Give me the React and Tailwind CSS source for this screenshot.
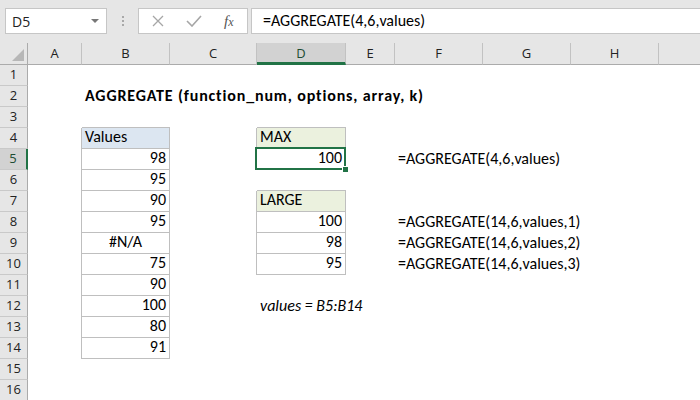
import React from 'react';

const COLS = ['A', 'B', 'C', 'D', 'E', 'F', 'G', 'H', 'I'];

// cells that carry a thin border box
const boxed = new Set([
    'B4', 'B5', 'B6', 'B7', 'B8', 'B9', 'B10', 'B11', 'B12', 'B13', 'B14',
    'D4', 'D5', 'D7', 'D8', 'D9', 'D10',
]);

const cells = {
    B2: { text: 'AGGREGATE (function_num, options, array, k)', cls: 'font-bold tracking-[0.85px] text-[16.5px]' },
    B4: { text: 'Values', bg: 'bg-[#dce6f1]' },
    B5: { text: '98', right: true },
    B6: { text: '95', right: true },
    B7: { text: '90', right: true },
    B8: { text: '95', right: true },
    B9: { text: '#N/A', center: true },
    B10: { text: '75', right: true },
    B11: { text: '90', right: true },
    B12: { text: '100', right: true },
    B13: { text: '80', right: true },
    B14: { text: '91', right: true },
    D4: { text: 'MAX', bg: 'bg-[#ebf1de]' },
    D5: { text: '100', right: true, selected: true },
    D7: { text: 'LARGE', bg: 'bg-[#ebf1de]' },
    D8: { text: '100', right: true },
    D9: { text: '98', right: true },
    D10: { text: '95', right: true },
    D12: { text: 'values = B5:B14', cls: 'italic' },
    F5: { text: '=AGGREGATE(4,6,values)' },
    F8: { text: '=AGGREGATE(14,6,values,1)' },
    F9: { text: '=AGGREGATE(14,6,values,2)' },
    F10: { text: '=AGGREGATE(14,6,values,3)' },
};

const cellFont = { fontFamily: 'Carlito, Calibri, Lato, sans-serif' };
const uiFont = { fontFamily: '"Segoe UI", "Open Sans", "Noto Sans", sans-serif' };

function Cell({ row, colIdx }) {
    const col = COLS[colIdx];
    const id = col + row;
    const c = cells[id] || {};
    // excel draws a border on the right / bottom pixel of the cell or its neighbour
    const right = boxed.has(id) || (colIdx + 1 < COLS.length && boxed.has(COLS[colIdx + 1] + row));
    const bottom = boxed.has(id) || boxed.has(col + (row + 1));

    return (
        <div
            className={
                'relative h-[21px] flex items-end pb-[3px] whitespace-nowrap text-[16px] text-black ' +
                (c.bg || '') + ' ' +
                (right ? 'border-r border-r-[#bfbfbf] ' : '') +
                (bottom ? 'border-b border-b-[#bfbfbf] ' : '') +
                (c.right ? 'justify-end pr-[3px] ' : c.center ? 'justify-center ' : 'pl-[3px] ') +
                (c.cls || '')
            }
            style={cellFont}
        >
            {c.text && <span className="leading-none">{c.text}</span>}
            {c.selected && (
                <>
                    <div className="absolute -left-[2px] -top-[2px] -right-[1px] -bottom-[1px] border-2 border-[#217346]" />
                    <div className="absolute -right-[4px] -bottom-[4px] w-[7px] h-[7px] bg-[#217346] border border-white" />
                </>
            )}
        </div>
    );
}

export default function App() {
    const rows = Array.from({ length: 16 }, (_, i) => i + 1);

    return (
        <div className="w-[700px] h-[400px] overflow-hidden bg-white select-none">
            {/* Formula bar */}
            <div className="h-[43px] bg-[#e6e6e6] flex items-start pt-[8px] pl-[5px]">
                <div className="w-[102px] h-[26px] bg-white border border-[#c6c6c6] flex items-center justify-between pl-[6px] pr-[7px]">
                    <span className="text-[14px] text-[#222]" style={uiFont}>D5</span>
                    <svg width="8" height="5" viewBox="0 0 8 5"><path d="M0 0 L8 0 L4 4 Z" fill="#777" /></svg>
                </div>
                <div className="w-[31px] h-[26px] flex flex-col items-center justify-center gap-[2px]">
                    <div className="w-[2px] h-[2px] bg-[#a8a8a8]" />
                    <div className="w-[2px] h-[2px] bg-[#a8a8a8]" />
                    <div className="w-[2px] h-[2px] bg-[#a8a8a8]" />
                </div>
                <div className="w-[110px] h-[26px] bg-white border border-[#c6c6c6] flex items-center pl-[13px]">
                    <svg width="12" height="12" viewBox="0 0 12 12">
                        <path d="M1 1 L11 11 M11 1 L1 11" stroke="#a6a6a6" strokeWidth="1.3" />
                    </svg>
                    <svg width="16" height="12" viewBox="0 0 16 12" className="ml-[22px]">
                        <path d="M1 6 L6 11 L15 1" stroke="#a6a6a6" strokeWidth="1.6" fill="none" />
                    </svg>
                    <span className="ml-[22px] text-[15px] italic text-[#555] leading-none" style={{ fontFamily: '"Liberation Serif", serif' }}>
                        f<span className="text-[12px]">x</span>
                    </span>
                </div>
                <div className="ml-[3px] flex-1 h-[26px] bg-white border border-r-0 border-[#c6c6c6] flex items-center pl-[11px]">
                    <span className="text-[16px] text-black" style={cellFont}>=AGGREGATE(4,6,values)</span>
                </div>
            </div>

            {/* Sheet */}
            <div className="grid grid-cols-[28px_54px_88px_87px_89px_49px_88px_88px_88px_41px]">
                {/* column headers */}
                <div className="h-[22px] bg-[#e6e6e6] border-b border-r border-[#ababab] relative overflow-hidden">
                    <svg width="12" height="12" viewBox="0 0 12 12" className="absolute right-[3px] bottom-[3px]">
                        <path d="M12 0 L12 12 L0 12 Z" fill="#b7b7b7" />
                    </svg>
                </div>
                {COLS.map((c, i) => (
                    <div
                        key={c}
                        className={
                            'h-[22px] flex items-center justify-center text-[13px] border-b ' +
                            (c === 'D'
                                ? 'bg-[#d2d2d2] border-b-[3px] border-b-[#217346] text-[#1d4d33] pt-[2px] '
                                : 'bg-[#e6e6e6] border-b-[#ababab] text-[#222] ') +
                            (i < COLS.length - 1 ? 'border-r border-r-[#c2c2c2] ' : '')
                        }
                        style={uiFont}
                    >
                        <span className="mt-[1px]">{c === 'I' ? '' : c}</span>
                    </div>
                ))}

                {rows.map((r) => (
                    <React.Fragment key={r}>
                        <div
                            className={
                                'h-[21px] flex items-center justify-center text-[13px] border-b border-b-[#c9c9c9] ' +
                                (r === 5
                                    ? 'bg-[#d2d2d2] border-r-2 border-r-[#217346] text-[#1d4d33]'
                                    : 'bg-[#e6e6e6] border-r border-r-[#ababab] text-[#222]')
                            }
                            style={uiFont}
                        >
                            {r}
                        </div>
                        {COLS.map((c, i) => (
                            <Cell key={c} row={r} colIdx={i} />
                        ))}
                    </React.Fragment>
                ))}
            </div>
        </div>
    );
}
